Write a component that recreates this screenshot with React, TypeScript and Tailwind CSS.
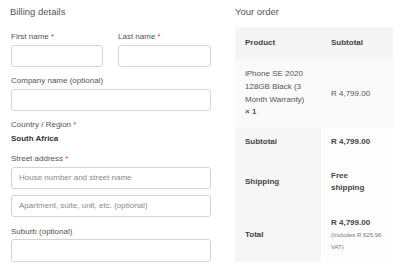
import React from "react";

const font = { fontFamily: '"Liberation Sans", Arial, sans-serif' };

function Label({ text, req }: { text: string; req?: boolean }) {
  return (
    <div className="h-[12px] leading-[12px] text-[8px] text-[#555] mb-[2px] whitespace-nowrap">
      {text}
      {req && <span className="text-[#e2401c]"> *</span>}
    </div>
  );
}

function Input({ placeholder }: { placeholder?: string }) {
  return (
    <div className="h-[22px] w-full border border-[#d4d4d4] rounded-[3px] bg-white flex items-center pl-[7px] text-[8px] text-[#8a8a8a] whitespace-nowrap">
      {placeholder}
    </div>
  );
}

export default function App() {
  return (
    <div style={font} className="w-[400px] h-[272px] bg-white flex overflow-hidden">
      {/* Left column */}
      <div className="ml-[11px] w-[200px] flex flex-col pt-[5px]">
        <div className="h-[14px] leading-[14px] text-[9.5px] text-[#555] -ml-px">Billing details</div>
        <div className="mt-[12px] flex gap-[15px]">
          <div className="w-[92px]">
            <Label text="First name" req />
            <Input />
          </div>
          <div className="flex-1">
            <Label text="Last name" req />
            <Input />
          </div>
        </div>
        <div className="mt-[8px]">
          <Label text="Company name (optional)" />
          <Input />
        </div>
        <div className="mt-[8px]">
          <Label text="Country / Region" req />
          <div className="h-[12px] leading-[12px] text-[8px] font-bold text-[#333] mt-[1px]">South Africa</div>
        </div>
        <div className="mt-[8px]">
          <Label text="Street address" req />
          <Input placeholder="House number and street name" />
          <div className="mt-[6px]">
            <Input placeholder="Apartment, suite, unit, etc. (optional)" />
          </div>
        </div>
        <div className="mt-[9px]">
          <div className="h-[12px] leading-[12px] text-[8px] text-[#555] mb-[1px]">Suburb (optional)</div>
          <div className="h-[23px] w-full border border-[#d4d4d4] rounded-[3px] bg-white" />
        </div>
      </div>

      {/* Right column */}
      <div className="ml-[24px] w-[158px] flex flex-col pt-[5px]">
        <div className="h-[14px] leading-[14px] text-[9.5px] text-[#555]">Your order</div>
        <div className="mt-[8px] text-[8px]">
          <div className="flex h-[32px] items-center bg-[#f5f5f5] font-bold text-[#444]">
            <div className="w-[86px] pl-[10px]">Product</div>
            <div className="flex-1 pl-[10px]">Subtotal</div>
          </div>
          <div className="flex h-[69px] items-center bg-[#fafafa] text-[#555]">
            <div className="w-[86px] pl-[10px] pr-[8px] leading-[12.8px]">
              iPhone SE 2020 128GB Black (3 Month Warranty)
              <br />
              <span className="font-bold">× 1</span>
            </div>
            <div className="flex-1 pl-[10px]">R 4,799.00</div>
          </div>
          <div className="flex h-[28px] items-center">
            <div className="w-[86px] h-full flex items-center pl-[10px] bg-[#f6f6f6] font-bold text-[#444]">Subtotal</div>
            <div className="flex-1 h-full flex items-center pl-[10px] bg-[#fdfdfd] font-bold text-[#444]">R 4,799.00</div>
          </div>
          <div className="flex h-[52px]">
            <div className="w-[86px] h-full flex items-center pl-[10px] bg-[#f6f6f6] font-bold text-[#444]">Shipping</div>
            <div className="flex-1 h-full flex items-center pl-[10px] bg-[#fdfdfd] font-semibold text-[#444] leading-[12px]">
              Free
              <br />
              shipping
            </div>
          </div>
          <div className="flex h-[54px]">
            <div className="w-[86px] h-full flex items-center pl-[10px] bg-[#f6f6f6] font-bold text-[#444]">Total</div>
            <div className="flex-1 h-full flex flex-col justify-center pl-[10px] bg-[#fdfdfd]">
              <div className="font-bold text-[#444] leading-[12px] mb-[1px]">R 4,799.00</div>
              <div className="text-[6px] text-[#777] leading-[11.5px]">
                (Includes R 625.96
                <br />
                VAT)
              </div>
            </div>
          </div>
        </div>
      </div>
    </div>
  );
}
